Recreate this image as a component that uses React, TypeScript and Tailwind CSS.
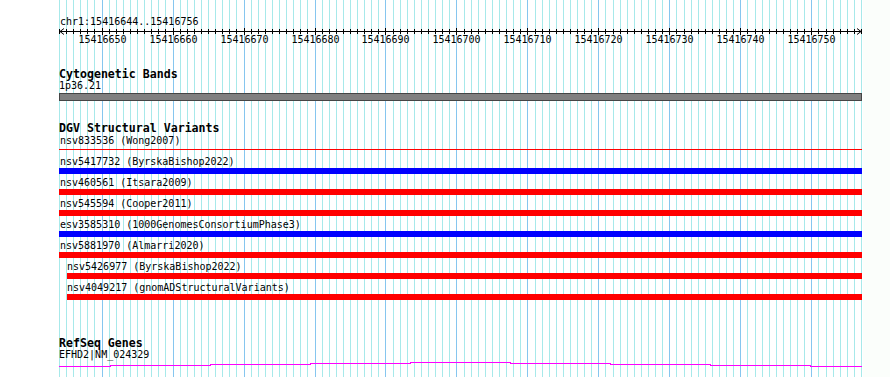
import * as React from 'react';

const START = 15416644;
const BP = 113;
const X0 = 59.5;
const PX = 802 / BP;

const xAt = (i: number) => Math.floor(X0 + i * PX) + 0.5;

interface Variant {
  name: string;
  kind: 'thin' | 'red' | 'blue';
  indent?: boolean;
}

const variants: Variant[] = [
  { name: 'nsv833536 (Wong2007)', kind: 'thin' },
  { name: 'nsv5417732 (ByrskaBishop2022)', kind: 'blue' },
  { name: 'nsv460561 (Itsara2009)', kind: 'red' },
  { name: 'nsv545594 (Cooper2011)', kind: 'red' },
  { name: 'esv3585310 (1000GenomesConsortiumPhase3)', kind: 'blue' },
  { name: 'nsv5881970 (Almarri2020)', kind: 'red' },
  { name: 'nsv5426977 (ByrskaBishop2022)', kind: 'red', indent: true },
  { name: 'nsv4049217 (gnomADStructuralVariants)', kind: 'red', indent: true },
];

const GridLayer = () => {
  const lines = Array.from({ length: BP + 1 }, (_, i) => i);
  return (
    <svg width="890" height="377" className="absolute inset-0" shapeRendering="crispEdges">
      <rect x="863" y="0" width="27" height="377" fill="#fbfefb" />
      {lines.map((i) => {
        const major = (START + i) % 10 === 0;
        return <line key={`grid-${i}`} x1={xAt(i)} x2={xAt(i)} y1="0" y2="377" stroke={major ? '#86c6ef' : '#a7e9ea'} strokeWidth="1" />;
      })}
    </svg>
  );
};

const Ruler = () => {
  const ticks = Array.from({ length: BP + 1 }, (_, i) => i);
  return (
    <svg width="890" height="20" overflow="visible" className="block">
      <g shapeRendering="crispEdges" stroke="#000" strokeWidth="1">
        <line x1="60" x2="861" y1="3.5" y2="3.5" />
        {ticks.map((i) => {
          const major = (START + i) % 10 === 0;
          return <line key={`tick-${i}`} x1={xAt(i)} x2={xAt(i)} y1={major ? 0 : 1} y2={major ? 7 : 6} />;
        })}
      </g>
      <g stroke="#000" strokeWidth="1" fill="none">
        <polyline points="64,0.5 60,3.5 64,6.5" />
        <polyline points="857,0.5 861,3.5 857,6.5" />
      </g>
      {ticks
        .filter((i) => (START + i) % 10 === 0)
        .map((i) => (
          <text key={`label-${i}`} x={xAt(i)} y="15" textAnchor="middle" fontSize="10" fontFamily="'DejaVu Sans Mono', monospace" fill="#000">
            {START + i}
          </text>
        ))}
    </svg>
  );
};

const App: React.FC = () => {
  return (
    <div className="relative w-[890px] h-[377px] overflow-hidden bg-white font-['DejaVu_Sans_Mono',monospace] text-[10px] text-black">
      <GridLayer />

      <div className="relative flex flex-col pt-[15px]">
        <div className="h-[13px] leading-[13px] pl-[60px]">chr1:15416644..15416756</div>
        <Ruler />

        <div className="mt-[20px] h-[12px] leading-[12px] pl-[59px] text-[11.6px] font-bold">Cytogenetic Bands</div>
        <div className="h-[11px] leading-[11px] pl-[59px]">1p36.21</div>
        <div className="mt-[2px] ml-[59px] w-[803px] h-[8px] bg-[#808080] border border-[#454545]" />

        <div className="mt-[21px] h-[12px] leading-[12px] pl-[59px] text-[11.6px] font-bold">DGV Structural Variants</div>
        {variants.map((v, index) => (
          <div key={`variant-${index}`} className={`h-[21px] flex flex-col ${v.indent ? 'pl-[66px]' : 'pl-[59px]'}`}>
            <div className={`h-[13px] pt-[1px] leading-[11px] ${v.indent ? 'pl-px' : 'pl-px'}`}>{v.name}</div>
            {v.kind === 'thin' ? (
              <div className="h-[6px] pt-[2px]">
                <div className="h-px w-[803px] bg-[#ff0000]" />
              </div>
            ) : (
              <div className={`h-[6px] ${v.indent ? 'ml-px w-[795px]' : 'w-[803px]'} ${v.kind === 'blue' ? 'bg-[#0000ff]' : 'bg-[#ff0000]'}`} />
            )}
          </div>
        ))}

        <div className="mt-[35px] h-[12px] leading-[12px] pl-[59px] text-[11.6px] font-bold">RefSeq Genes</div>
        <div className="h-[11px] leading-[11px] pl-[59px]">EFHD2|NM_024329</div>
        <svg width="890" height="10" className="block" shapeRendering="crispEdges">
          <path d="M59 6.5 H110.5 V5.5 H210.5 V4.5 H310.5 V3.5 H410.5 V2.5 H510.5 V3.5 H610.5 V4.5 H710.5 V5.5 H810.5 V6.5 H862" stroke="#ff00ff" strokeWidth="1" fill="none" />
        </svg>
      </div>
    </div>
  );
};

export default App;
